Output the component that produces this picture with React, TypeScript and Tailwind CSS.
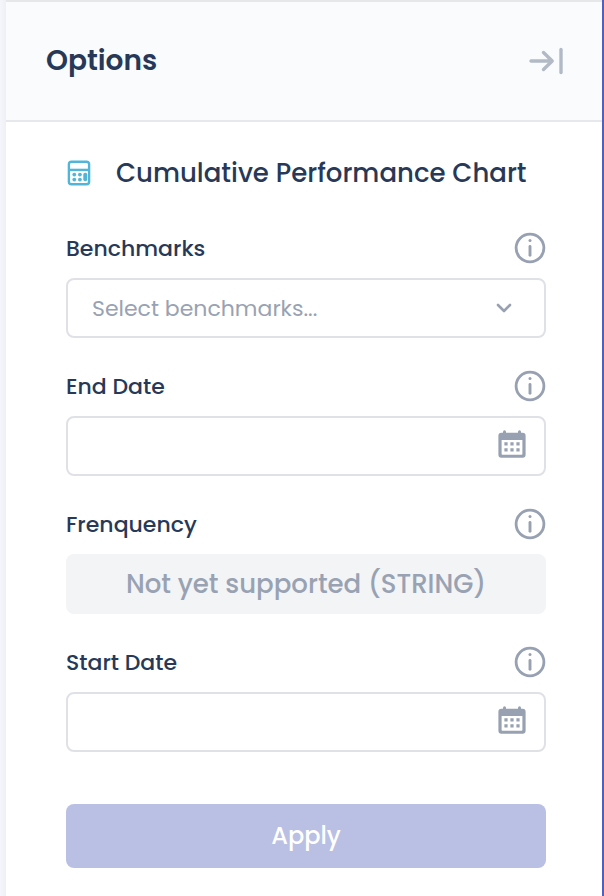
import type { ReactNode } from "react";

function CollapseIcon() {
  return (
    <svg width="38" height="32" viewBox="0 0 38 32" fill="none" stroke="#b2bac5" strokeWidth="3.4" strokeLinecap="round" strokeLinejoin="round">
      <path d="M4 16H25.2M16.5 7.5L25.2 16L16.5 24.5" />
      <path d="M34 4.5V27.5" />
    </svg>
  );
}

function CalculatorIcon() {
  return (
    <svg width="24" height="26" viewBox="0 0 24 26" fill="none">
      <rect x="1.9" y="1.7" width="20.2" height="22.6" rx="2.6" stroke="#50b5d6" strokeWidth="2.4" />
      <path d="M2 9.9H22" stroke="#50b5d6" strokeWidth="2.4" />
      <g fill="#50b5d6">
        <circle cx="7.3" cy="14.6" r="1.9" />
        <circle cx="12.9" cy="14.6" r="1.9" />
        <circle cx="7.3" cy="19.6" r="1.9" />
        <circle cx="12.9" cy="19.6" r="1.9" />
        <rect x="16.3" y="12.8" width="3.9" height="8.5" rx="1.8" />
      </g>
    </svg>
  );
}

function InfoIcon() {
  return (
    <svg width="32" height="32" viewBox="0 0 32 32" fill="none">
      <circle cx="16" cy="16" r="13.9" stroke="#97a1b1" strokeWidth="2.8" />
      <circle cx="16" cy="8.4" r="1.5" fill="#97a1b1" />
      <path d="M16 14.5V23.3" stroke="#97a1b1" strokeWidth="2.9" strokeLinecap="round" />
    </svg>
  );
}

function CalendarIcon() {
  return (
    <svg width="28" height="28" viewBox="0 0 28 28" fill="#97a1b1">
      <rect x="5" y="0.2" width="3" height="6" rx="1.5" />
      <rect x="20" y="0.2" width="3" height="6" rx="1.5" />
      <path
        fillRule="evenodd"
        d="M3.5 2.8H24.5A3 3 0 0 1 27.6 5.8V24.8A3 3 0 0 1 24.6 27.8H3.4A3 3 0 0 1 .4 24.8V5.8A3 3 0 0 1 3.5 2.8ZM3.6 10V23.9A.8.8 0 0 0 4.4 24.7H23.6A.8.8 0 0 0 24.4 23.9V10Z"
      />
      <path d="M6.4 12.3h3.2v3.2h-3.2zM12.4 12.3h3.2v3.2h-3.2zM18.4 12.3h3.2v3.2h-3.2zM6.4 18.3h3.2v3.2h-3.2zM12.4 18.3h3.2v3.2h-3.2zM18.4 18.3h3.2v3.2h-3.2z" />
    </svg>
  );
}

function Field({ label, children }: { label: string; children: ReactNode }) {
  return (
    <div>
      <div className="mb-3.5 flex h-8 items-center justify-between">
        <label className="pt-0.5 text-[22px] leading-8 font-medium">{label}</label>
        <InfoIcon />
      </div>
      {children}
    </div>
  );
}

function DateInput() {
  return (
    <div className="flex h-[60px] items-center justify-end rounded-lg border-2 border-[#e0e1e6] pr-[18px] pb-1">
      <CalendarIcon />
    </div>
  );
}

export default function App() {
  return (
    <div className="flex h-[896px] w-[604px] overflow-hidden bg-white font-['Poppins','Inter',sans-serif] text-[#273957]">
      <div className="w-1.5 shrink-0 bg-linear-to-r from-[#f5f6fb] to-[#eff0f5]" />
      <main className="min-w-0 flex-1">
        <header className="flex h-[122px] items-center justify-between border-t-2 border-b-2 border-t-[#e6e7e9] border-b-[#e7e8eb] bg-[#fafbfd] pr-[37px] pl-10">
          <h1 className="text-[28px] leading-10 font-semibold">Options</h1>
          <CollapseIcon />
        </header>
        <section className="pt-[31px] pr-[56px] pl-[60px]">
          <div className="mb-[39px] flex h-10 items-center">
            <span className="ml-px">
              <CalculatorIcon />
            </span>
            <h2 className="ml-[25px] text-[26px] leading-10 font-medium whitespace-nowrap">
              Cumulative Performance Chart
            </h2>
          </div>
          <div className="flex flex-col gap-8">
            <Field label="Benchmarks">
              <div className="flex h-[60px] items-center justify-between rounded-lg border-2 border-[#e0e1e6] pr-8 pl-6 text-[#98a2b2]">
                <span className="text-[22px]">Select benchmarks...</span>
                <svg width="16" height="10" viewBox="0 0 16 10" fill="none" stroke="#97a1b1" strokeWidth="2.6" strokeLinecap="round" strokeLinejoin="round">
                  <path d="M2 2L8 8L14 2" />
                </svg>
              </div>
            </Field>
            <Field label="End Date">
              <DateInput />
            </Field>
            <Field label="Frenquency">
              <div className="flex h-[60px] items-center justify-center rounded-lg bg-[#f3f4f6] text-[26px] font-medium text-[#98a2b2]">
                Not yet supported (STRING)
              </div>
            </Field>
            <Field label="Start Date">
              <DateInput />
            </Field>
          </div>
          <button className="mt-[52px] flex h-16 w-full items-center justify-center rounded-lg bg-[#bac0e4] text-2xl font-medium text-white">
            Apply
          </button>
        </section>
      </main>
      <div className="w-0.5 shrink-0 bg-[#5060c1]" />
    </div>
  );
}
